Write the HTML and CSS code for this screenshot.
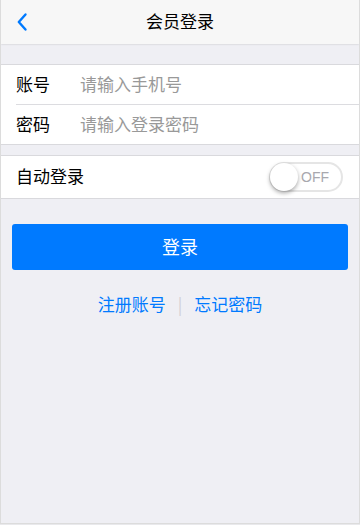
FILE: index.html
```html
<!DOCTYPE html>
<html lang="zh-CN">
<head>
<meta charset="utf-8">
<title>会员登录</title>
<link rel="stylesheet" href="styles.css">
</head>
<body>
<div class="app">
  <header class="bar">
    <a class="back" href="#"><svg width="12" height="20" viewBox="0 0 12 20"><path d="M9.5 2.5 L2.8 10 L9.5 17.5" fill="none" stroke="#007aff" stroke-width="2.4" stroke-linecap="round" stroke-linejoin="round"/></svg></a>
    <h1 class="title">会员登录</h1>
  </header>
  <main class="content">
    <form class="group">
      <div class="row">
        <label class="label">账号</label>
        <input class="input" type="text" placeholder="请输入手机号">
      </div>
      <div class="row">
        <label class="label">密码</label>
        <input class="input" type="password" placeholder="请输入登录密码">
      </div>
    </form>
    <div class="group auto">
      <span class="label">自动登录</span>
      <div class="switch"><span class="knob"></span><span class="off">OFF</span></div>
    </div>
    <div class="actions">
      <button class="btn" type="button">登录</button>
    </div>
    <div class="links">
      <a href="#">注册账号</a>
      <span class="sep">|</span>
      <a href="#">忘记密码</a>
    </div>
  </main>
</div>
</body>
</html>
```
FILE: styles.css
```css
html, body {
  margin: 0;
  padding: 0;
  background: #e9e9ec;
}
body {
  font-family: "Noto Sans CJK SC", "Noto Sans", "Liberation Sans", sans-serif;
  color: #000;
}
.app {
  width: 360px;
  height: 524px;
  box-sizing: border-box;
  border: 1px solid #dcdcdc;
  border-top: none;
  background: #efeff4;
  overflow: hidden;
}
.bar {
  height: 44px;
  background: #f7f7f7;
  box-shadow: 0 0 2px rgba(0,0,0,0.2);
  display: flex;
  align-items: center;
  justify-content: center;
  position: relative;
}
.back {
  position: absolute;
  left: 15px;
  top: 12px;
  display: flex;
}
.title {
  margin: 0;
  font-size: 17px;
  font-weight: 400;
  line-height: 42px;
  padding-bottom: 2px;
  color: #000;
}
.content {
  padding-top: 20px;
}
.group {
  margin: 0;
  background: #fff;
  border-top: 1px solid #d9d9dd;
  border-bottom: 1px solid #d9d9dd;
}
.row {
  height: 36px;
  padding-bottom: 3px;
  display: flex;
  align-items: center;
  margin-left: 15px;
}
.row + .row {
  border-top: 1px solid #dcdce0;
}
.label {
  font-size: 17px;
  width: 64px;
  padding-left: 0;
  color: #000;
}
.auto .label {
  padding-left: 15px;
  width: auto;
}
.input {
  flex: 1;
  border: none;
  outline: none;
  font: inherit;
  font-size: 17px;
  padding: 0;
  background: transparent;
}
.input::placeholder {
  color: #999;
}
.auto {
  margin-top: 10px;
  height: 42px;
  display: flex;
  align-items: center;
  justify-content: space-between;
}
.auto .label {
  padding-bottom: 4px;
}
.switch {
  position: relative;
  width: 74px;
  height: 30px;
  box-sizing: border-box;
  border: 2px solid #e5e5e5;
  border-radius: 20px;
  background: #fff;
  margin-right: 16px;
  display: flex;
  align-items: center;
  justify-content: flex-end;
}
.knob {
  position: absolute;
  left: -1px;
  top: -1px;
  width: 28px;
  height: 28px;
  border-radius: 50%;
  background: #fff;
  box-shadow: 0 2px 4px rgba(0,0,0,0.35);
}
.off {
  font-family: "Liberation Sans", Arial, sans-serif;
  font-size: 14px;
  color: #a8a8ae;
  margin-right: 12px;
}
.actions {
  padding: 25px 11px 0;
}
.btn {
  display: block;
  width: 100%;
  height: 46px;
  box-sizing: border-box;
  padding: 0 0 3px;
  border: none;
  border-radius: 3px;
  background: #007aff;
  color: #fff;
  font: inherit;
  font-size: 18px;
}
.links {
  display: flex;
  justify-content: center;
  align-items: center;
  gap: 12px;
  margin-top: 21px;
  font-size: 17px;
}
.links a {
  color: #007aff;
  text-decoration: none;
}
.sep {
  color: #cfcfd4;
}
```
